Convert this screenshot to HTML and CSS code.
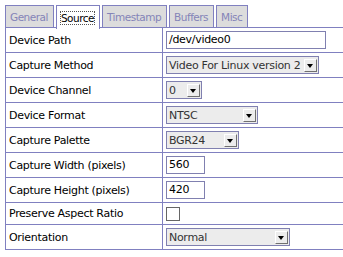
FILE: index.html
```html
<!DOCTYPE html>
<html lang="en">
<head>
    <meta charset="UTF-8">
    <title>Source Settings</title>
    <link rel="stylesheet" href="styles.css">
</head>
<body>
    <div class="tabs">
        <span class="tab">General</span>
        <span class="tab active"><span class="focus">Source</span></span>
        <span class="tab">Timestamp</span>
        <span class="tab">Buffers</span>
        <span class="tab">Misc</span>
    </div>

    <div class="panel">
        <table class="settings">
            <tr>
                <td class="label">Device Path</td>
                <td><div class="text-input wide">/dev/video0</div></td>
            </tr>
            <tr>
                <td class="label">Capture Method</td>
                <td><div class="select w-method"><span class="value">Video For Linux version 2</span><span class="arrow"></span></div></td>
            </tr>
            <tr>
                <td class="label">Device Channel</td>
                <td><div class="select w-channel"><span class="value">0</span><span class="arrow"></span></div></td>
            </tr>
            <tr>
                <td class="label">Device Format</td>
                <td><div class="select w-format"><span class="value">NTSC</span><span class="arrow"></span></div></td>
            </tr>
            <tr>
                <td class="label">Capture Palette</td>
                <td><div class="select w-palette"><span class="value">BGR24</span><span class="arrow"></span></div></td>
            </tr>
            <tr>
                <td class="label">Capture Width (pixels)</td>
                <td><div class="text-input small">560</div></td>
            </tr>
            <tr>
                <td class="label">Capture Height (pixels)</td>
                <td><div class="text-input small">420</div></td>
            </tr>
            <tr class="short">
                <td class="label">Preserve Aspect Ratio</td>
                <td><div class="checkbox"></div></td>
            </tr>
            <tr>
                <td class="label">Orientation</td>
                <td><div class="select w-orient"><span class="value">Normal</span><span class="arrow"></span></div></td>
            </tr>
        </table>
    </div>
</body>
</html>
```

FILE: styles.css
```css
body {
    font-family: 'DejaVu Sans', Verdana, sans-serif;
    font-size: 11px;
    letter-spacing: -0.3px;
    margin: 0;
    padding: 5px 0 0 5px;
    background-color: #fff;
    color: #000;
    overflow: hidden;
}
.tabs {
    display: flex;
    gap: 2px;
    height: 22px;
}
.tab {
    display: flex;
    align-items: center;
    padding: 0 5px 0 4px;
    border: 1px solid #8080c0;
    border-bottom: none;
    background-color: #dcdcdc;
    color: #8484b8;
    font-size: 10.5px;
    letter-spacing: -0.5px;
}
.tab.active {
    background-color: #fff;
    color: #000;
    position: relative;
    z-index: 1;
    height: 23px;
}
.focus {
    outline: 1px dotted #555;
}
.panel {
    overflow: hidden;
}
.settings {
    border-collapse: collapse;
    width: 360px;
    border: 1px solid #8080c0;
}
.settings td {
    border: 1px solid #8080c0;
    height: 24px;
    padding: 0 3px;
}
.settings .short td {
    height: 21px;
}
.settings td.label {
    width: 150px;
}
.text-input {
    border: 1px solid #8080b0;
    height: 16px;
    line-height: 16px;
    padding: 0 2px;
    background: #fff;
}
.text-input.wide {
    width: 154px;
}
.text-input.small {
    width: 33px;
}
.select {
    display: flex;
    align-items: center;
    border: 1px solid #8080b0;
    height: 16px;
    padding: 0 1px 0 2px;
    background-color: #ececec;
    color: #333;
}
.select .value {
    flex: 1;
    white-space: nowrap;
}
.select .arrow {
    width: 13px;
    height: 13px;
    box-sizing: border-box;
    background-color: #ececec;
    border: 1px solid;
    border-color: #fff #707070 #707070 #fff;
    position: relative;
}
.select .arrow::after {
    content: "";
    position: absolute;
    left: 2px;
    top: 4px;
    border-left: 3.5px solid transparent;
    border-right: 3.5px solid transparent;
    border-top: 4px solid #000;
}
.w-method { width: 148px; }
.w-channel { width: 31px; }
.w-format { width: 87px; }
.w-palette { width: 68px; }
.w-orient { width: 119px; }
.checkbox {
    width: 12px;
    height: 12px;
    border: 1px solid #666;
    background: #fff;
}
```
